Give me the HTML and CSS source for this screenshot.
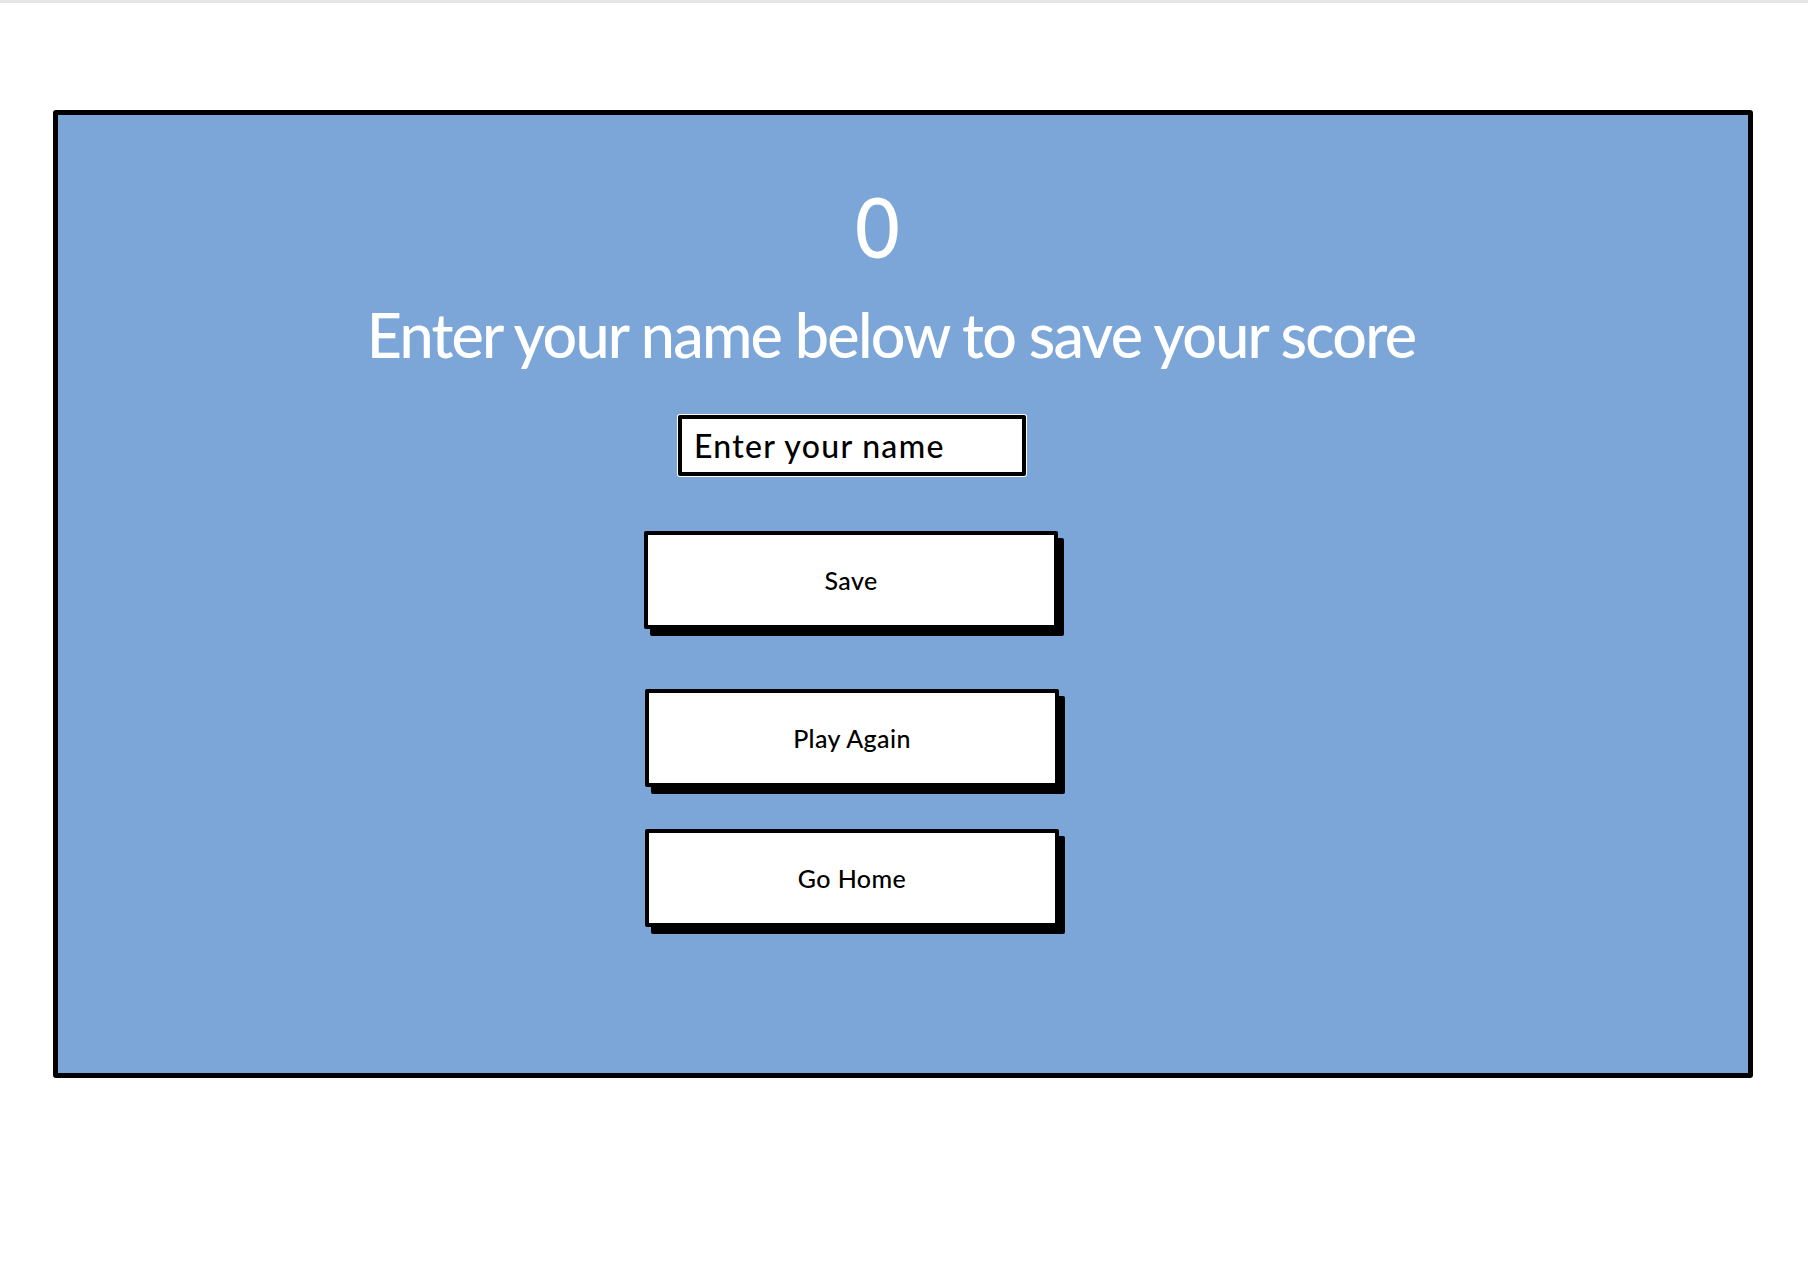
FILE: index.html
```html
<!DOCTYPE html>
<html lang="en">
<head>
<meta charset="utf-8">
<title>Save your score</title>
<link rel="stylesheet" href="styles.css">
</head>
<body>
<div class="topbar"></div>
<main class="panel">
  <div class="score">0</div>
  <h1 class="prompt">Enter your name below to save your score</h1>
  <form class="save-form">
    <input class="name-input" type="text" placeholder="Enter your name">
    <button class="btn btn-save" type="button">Save</button>
  </form>
  <button class="btn btn-again" type="button">Play Again</button>
  <button class="btn btn-home" type="button">Go Home</button>
</main>
</body>
</html>
```
FILE: styles.css
```css
* { box-sizing: border-box; }
html, body { margin: 0; padding: 0; background: #ffffff; }
body { font-family: Lato, "Open Sans", sans-serif; height: 1270px; overflow: hidden; }
.topbar { height: 3px; background: #e6e6e6; }
.panel {
  margin: 107px 55px 0 53px;
  height: 968px;
  border: 5px solid #000;
  border-radius: 3px;
  background: #7ba6d7;
  display: flex;
  flex-direction: column;
  align-items: center;
  padding: 61px 24px 0 0;
}
.score {
  color: #fff;
  font-size: 84px;
  font-weight: 500;
  line-height: 100px;
  margin-right: 28px;
  transform: scaleX(0.92);
}
.prompt {
  color: #fff;
  font-size: 61px;
  font-weight: 500;
  letter-spacing: -1.75px;
  line-height: 80px;
  margin: 19px 0 0 0;
}
.save-form {
  display: flex;
  flex-direction: column;
  align-items: center;
  margin-right: 78px;
}
.name-input {
  width: 348px;
  height: 61px;
  margin-top: 40px;
  border: 4px solid #000;
  border-radius: 2px;
  box-shadow: 0 0 0 1px #fff;
  background: #fff;
  font-family: inherit;
  font-size: 32px;
  font-weight: 500;
  letter-spacing: 1.3px;
  color: #000;
  padding: 0 12px;
  outline: none;
}
.name-input::placeholder { color: #000; opacity: 1; }
.btn {
  width: 414px;
  height: 98px;
  border: 4px solid #000;
  border-radius: 2px;
  background: #fff;
  box-shadow: 6px 7px 0 #000;
  font-family: inherit;
  font-size: 25px;
  font-weight: 500;
  letter-spacing: 0.4px;
  color: #000;
  cursor: pointer;
  margin-right: 78px;
}
.btn-save { margin-top: 55px; margin-right: 0; margin-left: -2px; }
.btn-again { margin-top: 60px; }
.btn-home { margin-top: 42px; }
```
